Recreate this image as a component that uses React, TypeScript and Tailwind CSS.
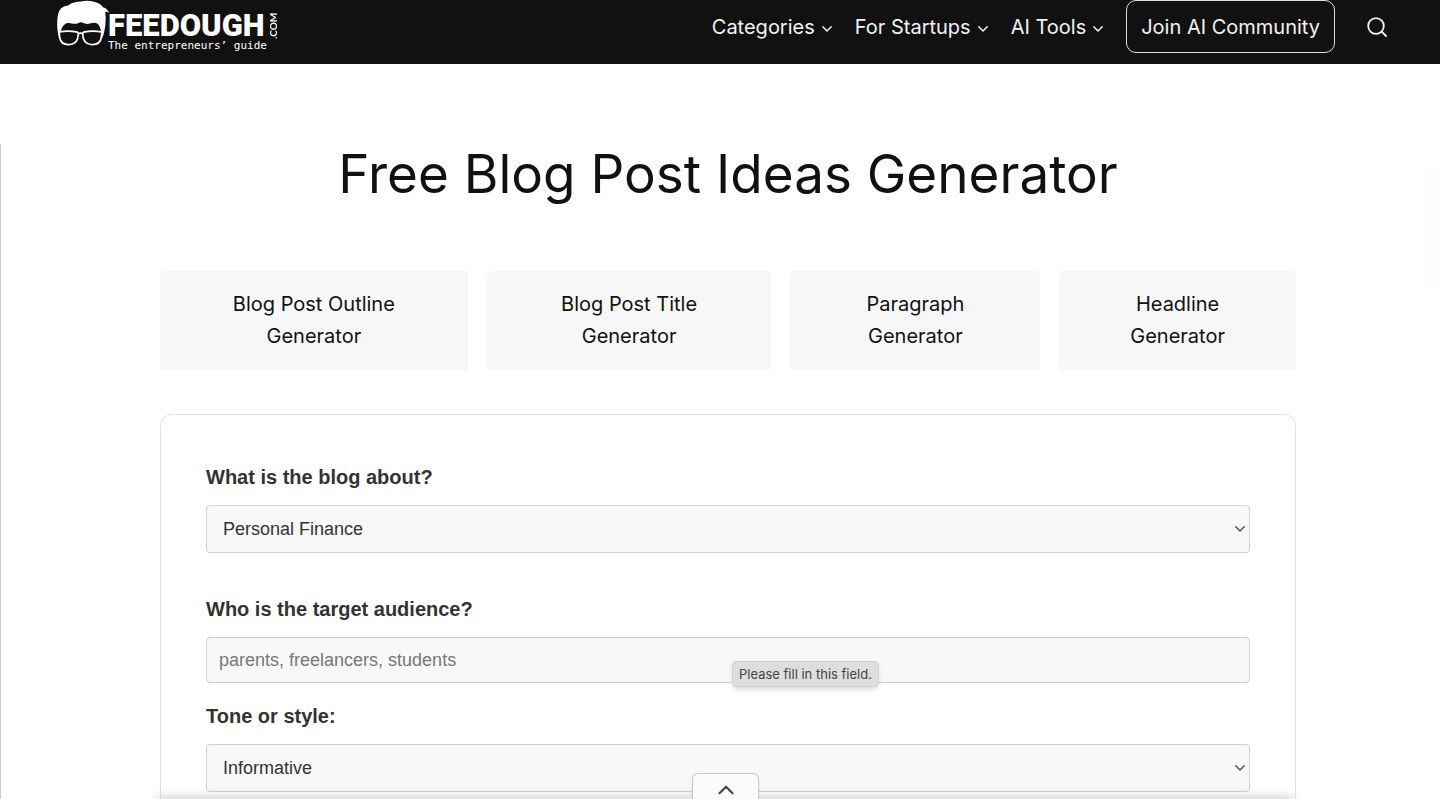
import { ChevronUp } from "lucide-react";

const navItems = ["Categories", "For Startups", "AI Tools"];

const tools = [
  ["Blog Post Outline", "Generator"],
  ["Blog Post Title", "Generator"],
  ["Paragraph", "Generator"],
  ["Headline", "Generator"],
];

function Caret({ className }: { className: string }) {
  return (
    <svg viewBox="0 0 12 8" className={className} fill="none" stroke="currentColor" strokeWidth="1.5" strokeLinecap="round" strokeLinejoin="round" aria-hidden="true">
      <path d="M1.800 1.800 6 6l4.200-4.200" />
    </svg>
  );
}

function Logo() {
  return (
    <a href="#" className="flex items-start text-white" aria-label="Feedough">
      <svg viewBox="0 0 54 48" className="h-12 w-[54px] shrink-0" aria-hidden="true">
        <path
          fill="#fff"
          d="M3 38C1.500 32 .8 26 1.300 20 1.600 15.500 2.500 12 4 9.500 6 7 8.500 6.200 12 5.500 16 2.500 20 1.600 25 1.500c4-1 9-.8 13 .3 4.500 1 7.500 3 9 5.500 2.800.8 5 2.800 6.300 5.700-1.500-1.200-2.800-1.500-4-1.300C50.300 20 49.500 29 46.500 38l-1.500-6c-.2-3-1-5-2-6.500-1.200-1.800-2.400-2.700-4.500-2.700-3.500.2-5.500 1.400-8.500 1-2-.3-3.200-1.500-5-1.600-1.800.1-3 1.300-5 1.600-3 .3-5.500-1.200-8.500-.8-2.200.5-3.800 2-5 4-1 1.700-1.500 3-1.700 5z"
        />
        <path
          fill="#111"
          stroke="#fff"
          strokeWidth="1.700"
          strokeLinejoin="round"
          d="M3.200 31.800c5.500-.8 13-.8 18.300.4.700.3.900 1.200.8 2.300-.3 6-3 9.500-8 10-5.800.5-9.800-1.800-10.600-7zM45.800 31.800c-5.500-.8-13-.8-18.300.4-.7.300-.9 1.200-.8 2.300.3 6 3 9.500 8 10 5.800.5 9.800-1.800 10.600-7z"
        />
        <path fill="none" stroke="#fff" strokeWidth="1.800" d="M22 33.800c1.500-.8 3.500-.8 5 0" />
      </svg>
      <span className="-ml-0.5 flex flex-col pt-3">
        <span className="flex items-center">
          <span className="font-[Roboto,sans-serif] text-[31px] leading-7 font-black">FEEDOUGH</span>
          <span className="ml-0.5 h-7 rotate-180 text-center font-[Lato,sans-serif] text-[10px] leading-3 font-bold [writing-mode:vertical-rl]">.COM</span>
        </span>
        <span className="font-['DejaVu_Sans_Mono',monospace] text-[11px] leading-3">The entrepreneurs’ guide</span>
      </span>
    </a>
  );
}

function SelectField({ id, label, value }: { id: string; label: string; value: string }) {
  return (
    <div>
      <label htmlFor={id} className="block text-xl leading-6 font-bold text-[#333]">{label}</label>
      <div className="mt-4 grid items-center">
        <select id={id} defaultValue={value} className="col-start-1 row-start-1 h-12 w-full appearance-none rounded-sm border border-[#d0d0d0] bg-[#f8f8f8] px-4 text-lg text-[#333]">
          <option>{value}</option>
        </select>
        <Caret className="pointer-events-none col-start-1 row-start-1 mr-1 h-2 w-3 justify-self-end text-[#555]" />
      </div>
    </div>
  );
}

export default function App() {
  return (
    <div className="relative h-screen overflow-hidden bg-white font-[Inter,sans-serif] text-[#111]">
      <header className="flex h-16 items-start justify-between bg-[#111] pr-[53px] pl-14 text-[#f3f3f3]">
        <Logo />
        <nav className="flex items-center text-xl">
          <div className="flex items-center gap-[22px]">
            {navItems.map((item) => (
              <a key={item} href="#" className="flex items-center gap-1.5">
                {item}
                <Caret className="mt-1 h-2 w-3" />
              </a>
            ))}
          </div>
          <a href="#" className="ml-[22px] flex h-[53px] items-center rounded-[10px] border border-[#ddd] px-3.5">Join AI Community</a>
          <button type="button" aria-label="Search" className="ml-8">
            <svg viewBox="0 0 20 20" className="size-5" fill="none" stroke="currentColor" strokeWidth="1.800" strokeLinecap="round" aria-hidden="true">
              <circle cx="9" cy="9" r="7.800" />
              <path d="m14.700 14.700 4.300 4.300" />
            </svg>
          </button>
        </nav>
      </header>

      <main className="mt-20 border-l border-[#ccc] pr-36 pl-[159px]">
        <h1 className="text-center text-[53px] leading-[60px]">Free Blog Post Ideas Generator</h1>

        <div className="mt-[67px] grid grid-cols-[308fr_285fr_250fr_237fr] gap-[19px]">
          {tools.map(([first, second]) => (
            <a key={first} href="#" className="flex flex-col rounded-sm bg-[#f7f7f7] pt-[17px] pb-[18px] text-center text-xl leading-8">
              <span>{first}</span>
              <span>{second}</span>
            </a>
          ))}
        </div>

        <form className="mt-11 h-[500px] rounded-xl border border-[#e2e2e2] px-[45px] pt-[50px] font-['Liberation_Sans',Arial,sans-serif]">
          <SelectField id="topic" label="What is the blog about?" value="Personal Finance" />
          <div className="relative mt-11">
            <label htmlFor="audience" className="block text-xl leading-6 font-bold text-[#333]">Who is the target audience?</label>
            <input id="audience" required placeholder="parents, freelancers, students" className="mt-4 block h-[46px] w-full rounded-sm border border-[#d0d0d0] bg-[#f8f8f8] px-3 text-lg text-[#333] placeholder:text-[#777]" />
            <div role="tooltip" className="absolute top-16 left-[526px] rounded-sm border border-[#d2d2d2] bg-[#dedede] px-1.5 font-[Inter,sans-serif] text-[13px] leading-6 text-[#444] shadow-md">
              Please fill in this field.
            </div>
          </div>
          <div className="mt-[21px]">
            <SelectField id="tone" label="Tone or style:" value="Informative" />
          </div>
        </form>
      </main>

      <div className="absolute right-[150px] bottom-0 left-40 h-0 shadow-[0_0_8px_2px_rgba(0,0,0,0.3)]" />
      <button type="button" aria-label="Expand" className="absolute bottom-0 left-[692px] flex h-[26px] w-[67px] items-end justify-center rounded-t-md border border-b-0 border-[#ccc] bg-[#fafafa] text-[#444] shadow-sm">
        <ChevronUp size={26} strokeWidth={2} className="-mb-1" />
      </button>
      <div className="absolute top-[170px] right-0 h-28 w-5 bg-linear-to-r from-white to-[#fbfbfb] blur-xs" />
    </div>
  );
}
